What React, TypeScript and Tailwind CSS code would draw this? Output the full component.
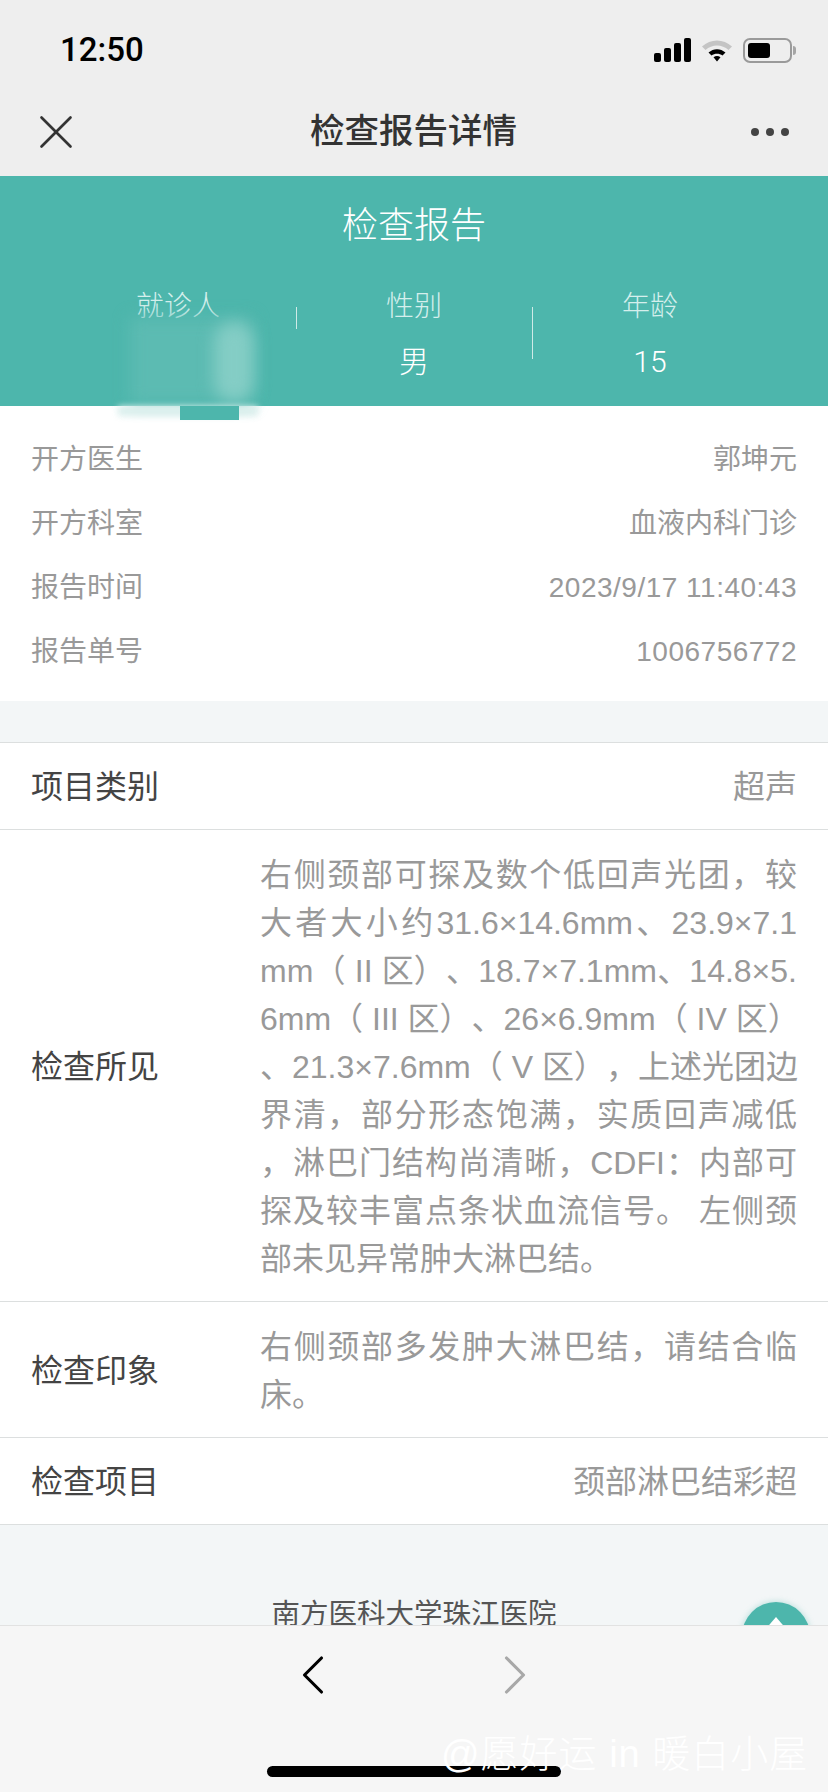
import React from 'react';
import { X, ChevronLeft, ChevronRight } from 'lucide-react';

const FONT = '[font-family:"Liberation_Sans","Noto_Sans_CJK_SC",sans-serif] [text-spacing-trim:space-all]';

const INFO_ROWS = [
  { label: '开方医生', value: '郭坤元' },
  { label: '开方科室', value: '血液内科门诊' },
  { label: '报告时间', value: '2023/9/17 11:40:43', numeric: true },
  { label: '报告单号', value: '1006756772', numeric: true },
];

const FINDINGS = [
  '右侧颈部可探及数个低回声光团，较',
  '大者大小约31.6×14.6mm、23.9×7.1',
  'mm（ II 区）、18.7×7.1mm、14.8×5.',
  '6mm（ III 区）、26×6.9mm（ IV 区）',
  '、21.3×7.6mm（ V 区），上述光团边',
  '界清，部分形态饱满，实质回声减低',
  '，淋巴门结构尚清晰，CDFI：内部可',
  '探及较丰富点条状血流信号。 左侧颈',
];

function StatusIcons() {
  return (
    <div className="flex items-center gap-[10px]">
      <svg width="37" height="24" viewBox="0 0 37 24">
        <rect x="0" y="15" width="7" height="9" rx="2" fill="#000" />
        <rect x="10" y="10" width="7" height="14" rx="2" fill="#000" />
        <rect x="20" y="5" width="7" height="19" rx="2" fill="#000" />
        <rect x="30" y="0" width="7" height="24" rx="2" fill="#000" />
      </svg>
      <svg width="32" height="24" viewBox="0 0 32 24">
        <path d="M1 8.5C9.5 0.5 22.5 0.5 31 8.5L27.5 12C21 6 11 6 4.500 12Z" fill="#c4c4c4" />
        <path d="M7.500 14.500C12.500 10 19.500 10 24.500 14.500L21.500 17.500C18.500 15 13.500 15 10.500 17.500Z" fill="#000" />
        <path d="M12.500 19.200C14.800 17.600 17.200 17.600 19.500 19.200L16 23.500Z" fill="#000" />
      </svg>
      <div className="flex items-center">
        <div className="w-[49px] h-[25px] rounded-[7px] border-2 border-[#9a9a9a] p-[3px]">
          <div className="w-[22px] h-full rounded-[3px] bg-black" />
        </div>
        <div className="w-[3px] h-[9px] ml-[1px] rounded-r-full bg-[#a5a5a5]" />
      </div>
    </div>
  );
}

function Stat({ label, value, className }: { label: string; value?: string; className?: string }) {
  return (
    <div className={`flex flex-col items-center ${className ?? ''}`}>
      <div className="text-[28px] leading-[40px] text-[#d5efec] font-light">{label}</div>
      <div className="mt-[15px] h-[40px] text-[30px] leading-[40px] text-white font-light [font-family:Roboto,'Noto_Sans_CJK_SC',sans-serif]">{value}</div>
    </div>
  );
}

function DetailRow({ label, children, className }: { label: string; children: React.ReactNode; className?: string }) {
  return (
    <div className={`flex items-center justify-between px-[31px] border-b border-[#dcdfdf] ${className ?? ''}`}>
      <div className="text-[32px] text-[#444444] shrink-0 pt-[2px]">{label}</div>
      {children}
    </div>
  );
}

export default function App() {
  return (
    <div className={`relative h-[1792px] w-[828px] flex flex-col overflow-hidden bg-[#f3f6f7] ${FONT}`}>
      {/* status bar + nav */}
      <header className="h-[176px] shrink-0 bg-[#eeeeee]">
        <div className="h-[88px] flex items-center justify-between pl-[60px] pr-[32px] pt-[12px]">
          <span className="text-[33px] font-medium text-black [font-family:Roboto,sans-serif]">12:50</span>
          <StatusIcons />
        </div>
        <div className="h-[88px] flex items-center justify-between pl-[27px] pr-[39px] pb-[1px]">
          <X size={58} strokeWidth={1.1} className="text-[#333333]" />
          <h1 className="mr-[9px] text-[34.500px] font-medium text-[#333333]">检查报告详情</h1>
          <div className="flex gap-[7px]">
            <span className="w-[8px] h-[8px] rounded-full bg-[#444444]" />
            <span className="w-[8px] h-[8px] rounded-full bg-[#444444]" />
            <span className="w-[8px] h-[8px] rounded-full bg-[#444444]" />
          </div>
        </div>
      </header>

      <main className="relative flex-1 min-h-0 overflow-hidden">
        {/* teal banner */}
        <section className="relative h-[230px] bg-[#4db6ac] pt-[25px]">
          <h2 className="text-center text-[36px] leading-[50px] text-white font-light">检查报告</h2>
          <div className="mt-[36px] px-[60px] grid grid-cols-3">
            <Stat label="就诊人" />
            <div className="relative">
              <span className="absolute left-0 top-[20px] h-[22px] w-px bg-[#cfeae7]" />
              <Stat label="性别" value="男" />
            </div>
            <div className="relative">
              <span className="absolute left-0 top-[20px] h-[52px] w-px bg-[#cfeae7]" />
              <Stat label="年龄" value="15" />
            </div>
          </div>
        </section>

        {/* smudged-out name */}
        <div className="absolute left-[130px] top-[142px] w-[122px] h-[86px] bg-[#5cbbb2] blur-[8px]" />
        <div className="absolute left-[214px] top-[146px] w-[40px] h-[80px] rounded-full bg-[#84cdc5] blur-[8px]" />
        <div className="absolute left-[118px] top-[230px] w-[140px] h-[10px] bg-[#dbefed] blur-[3px]" />
        <div className="absolute left-[180px] top-[230px] w-[59px] h-[14px] bg-[#4db6ac]" />

        {/* prescription info */}
        <section className="h-[295px] bg-white pt-[22px] px-[31px]">
          {INFO_ROWS.map(row => (
            <div key={row.label} className="h-[64px] flex items-center justify-between text-[28px] text-[#999999]">
              <span>{row.label}</span>
              <span className={row.numeric ? 'tracking-[0.5px]' : ''}>{row.value}</span>
            </div>
          ))}
        </section>

        {/* report body */}
        <section className="mt-[41px] bg-white border-t border-[#dcdfdf]">
          <DetailRow label="项目类别" className="h-[87px]">
            <div className="text-[32px] text-[#999999] pt-[2px]">超声</div>
          </DetailRow>
          <DetailRow label="检查所见" className="h-[472px]">
            <div className="w-[537px] pt-[3px] text-[32px] leading-[48px] text-[#999999]">
              {FINDINGS.map(line => (
                <div key={line} className="whitespace-nowrap text-justify [text-align-last:justify]">{line}</div>
              ))}
              <div>部未见异常肿大淋巴结。</div>
            </div>
          </DetailRow>
          <DetailRow label="检查印象" className="h-[136px]">
            <div className="w-[537px] pt-[3px] text-[32px] leading-[48px] text-[#999999]">
              <div className="whitespace-nowrap text-justify [text-align-last:justify]">右侧颈部多发肿大淋巴结，请结合临</div>
              <div>床。</div>
            </div>
          </DetailRow>
          <DetailRow label="检查项目" className="h-[87px]">
            <div className="text-[32px] text-[#999999] pt-[2px]">颈部淋巴结彩超</div>
          </DetailRow>
        </section>

        <footer className="mt-[69px] text-center text-[28.500px] leading-[40px] text-[#555555]">南方医科大学珠江医院</footer>

        {/* back-to-top button, cut off by the toolbar */}
        <div className="absolute left-[742px] top-[1426px] w-[68px] h-[68px] rounded-full bg-[#4db6ac] shadow-[0_0_6px_rgba(77,182,172,0.4)]">
          <div className="absolute left-[22px] top-[15px] w-0 h-0 border-x-[12px] border-x-transparent border-b-[14px] border-b-white" />
        </div>
      </main>

      {/* browser toolbar */}
      <nav className="relative h-[167px] shrink-0 bg-[#f6f6f6] border-t border-[#e2e2e2]">
        <div className="flex justify-center gap-[134px] pt-[22px]">
          <ChevronLeft size={68} strokeWidth={1.1} className="-my-[7px] text-black" />
          <ChevronRight size={68} strokeWidth={1.1} className="-my-[7px] text-[#a8a8a8]" />
        </div>
        <div className="absolute left-[267px] top-[140px] w-[294px] h-[11px] rounded-full bg-black" />
        <div className="absolute left-[441px] top-[105px] whitespace-nowrap text-[38px] leading-[46px] text-white font-light tracking-[1px]">@愿好运 in 暖白小屋</div>
      </nav>
    </div>
  );
}
